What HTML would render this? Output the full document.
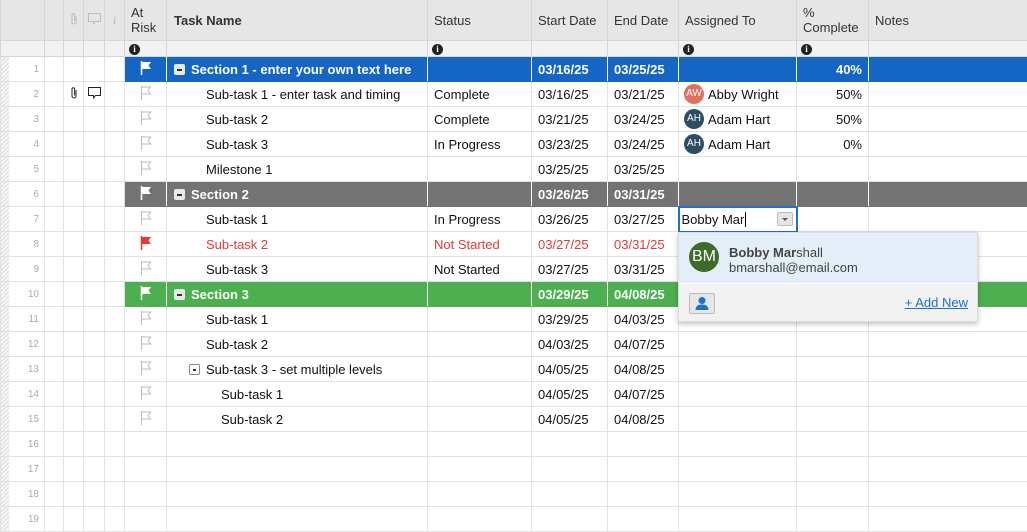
<!DOCTYPE html>
<html><head><meta charset="utf-8"><style>
*{box-sizing:border-box;margin:0;padding:0}
body{width:1027px;height:511px;overflow:hidden;background:#fff;font-family:"Liberation Sans",Arial,sans-serif;font-size:13px;color:#111;position:relative}
table{border-collapse:collapse;table-layout:fixed;width:1027px;margin-top:-1px}
td{border:1px solid #e2e2e2;white-space:nowrap;overflow:hidden;padding:0 6px;height:25px;vertical-align:middle}
tr.hd td{height:41px;background:#e6e6e6;border-color:#d6d6d6;color:#333;font-size:13px}
tr.ir td{height:16px;background:#f2f2f2;border-color:#d6d6d6;padding:0 4px}
td.n{color:#aaa;font-size:10px;text-align:right;padding-right:5px;position:relative}
td.n:before{content:"";position:absolute;left:0;top:0;bottom:0;width:8px;background:repeating-linear-gradient(135deg,#ddd 0 1px,#f6f6f6 1px 3px)}
td.c{text-align:center;padding:0}
td.r{text-align:right}
.s1 td.x{background:#1565c4;color:#fff;font-weight:bold;border-color:#1565c4;border-left-color:#fff;border-right-color:#fff}
.s2 td.x{background:#737373;color:#fff;font-weight:bold;border-color:#737373;border-left-color:#fff;border-right-color:#fff}
.s3 td.x{background:#4caf50;color:#fff;font-weight:bold;border-color:#4caf50;border-left-color:#fff;border-right-color:#fff}
.box{display:inline-block;width:11px;height:11px;background:#e8e8e8;border-radius:2px;vertical-align:-1px;margin-right:6px;position:relative}
.box:after{content:"";position:absolute;left:3px;right:3px;top:5px;height:2px;background:#333}
.bw{border:1px solid #888;background:#fff}
.bw:after{top:4px}
.i1{padding-left:39px}.i2{padding-left:54px}
.red{color:#e53935}
.fx{display:flex;align-items:center}
.av{display:inline-block;width:20px;height:20px;border-radius:50%;color:#fff;font-size:10px;text-align:center;line-height:20px;margin-right:4px;flex:none}
.info{display:inline-block;width:11px;height:11px;border-radius:50%;background:#222;color:#fff;font-size:9px;font-weight:bold;text-align:center;line-height:11px;font-family:"Liberation Serif",serif;vertical-align:middle}
.b{font-weight:bold}
</style></head><body>
<table>
<colgroup><col style="width:44px"><col style="width:19px"><col style="width:20px"><col style="width:21px"><col style="width:20px"><col style="width:42px"><col style="width:261px"><col style="width:104px"><col style="width:76px"><col style="width:71px"><col style="width:118px"><col style="width:72px"><col style="width:159px"></colgroup>
<tr class="hd"><td></td><td></td>
<td class="c"><svg width="8" height="13" viewBox="0 0 8 13"><path d="M6 4v6a2 2 0 0 1-4 0V3a1.3 1.3 0 0 1 2.6 0v6.5" fill="none" stroke="#bbb" stroke-width="1"/></svg></td>
<td class="c"><svg width="13" height="12" viewBox="0 0 13 12"><path d="M.5.5h12v8h-5l-2 2.5v-2.5h-5z" fill="none" stroke="#bbb"/></svg></td>
<td class="c" style="color:#bbb;font-style:italic;font-family:'Liberation Serif',serif">i</td>
<td style="padding:0 6px;line-height:15px">At<br>Risk</td>
<td class="b" style="padding-left:7px">Task Name</td><td>Status</td><td>Start Date</td><td>End Date</td><td>Assigned To</td><td style="line-height:15px">%<br>Complete</td><td>Notes</td></tr>
<tr class="ir"><td></td><td></td><td></td><td></td><td></td><td><span class="info">i</span></td><td></td><td><span class="info">i</span></td><td></td><td></td><td><span class="info">i</span></td><td><span class="info">i</span></td><td></td></tr>

<tr class="s1"><td class="n">1</td><td></td><td></td><td></td><td></td><td class="c x"><svg width="12" height="14"><path d="M1.5 0v14" stroke="#fff" stroke-width="1.5"/><path d="M2 1h9l-2.5 3.5 2.5 3.5h-9z" fill="#fff"/></svg></td><td class="x" style="padding-left:7px"><span class="box"></span>Section 1 - enter your own text here</td><td class="x"></td><td class="x">03/16/25</td><td class="x">03/25/25</td><td class="x"></td><td class="x r">40%</td><td class="x"></td></tr>

<tr><td class="n">2</td><td></td><td class="c"><svg width="8" height="13" viewBox="0 0 8 13"><path d="M6 4v6a2 2 0 0 1-4 0V3a1.3 1.3 0 0 1 2.6 0v6.5" fill="none" stroke="#222" stroke-width="1"/></svg></td><td class="c"><svg width="13" height="12" viewBox="0 0 13 12"><path d="M.5.5h12v8h-5l-2 2.5v-2.5h-5z" fill="none" stroke="#222"/></svg></td><td></td><td class="c"><svg width="12" height="14"><path d="M1.5 0v14M1.5 1h9l-2.5 3.5 2.5 3.5h-9" fill="none" stroke="#bbb"/></svg></td><td class="i1">Sub-task 1 - enter task and timing</td><td>Complete</td><td>03/16/25</td><td>03/21/25</td><td style="padding-left:5px"><div class="fx"><span class="av" style="background:#e07060">AW</span>Abby Wright</div></td><td class="r">50%</td><td></td></tr>

<tr><td class="n">3</td><td></td><td></td><td></td><td></td><td class="c"><svg width="12" height="14"><path d="M1.5 0v14M1.5 1h9l-2.5 3.5 2.5 3.5h-9" fill="none" stroke="#bbb"/></svg></td><td class="i1">Sub-task 2</td><td>Complete</td><td>03/21/25</td><td>03/24/25</td><td style="padding-left:5px"><div class="fx"><span class="av" style="background:#2d4e62">AH</span>Adam Hart</div></td><td class="r">50%</td><td></td></tr>

<tr><td class="n">4</td><td></td><td></td><td></td><td></td><td class="c"><svg width="12" height="14"><path d="M1.5 0v14M1.5 1h9l-2.5 3.5 2.5 3.5h-9" fill="none" stroke="#bbb"/></svg></td><td class="i1">Sub-task 3</td><td>In Progress</td><td>03/23/25</td><td>03/24/25</td><td style="padding-left:5px"><div class="fx"><span class="av" style="background:#2d4e62">AH</span>Adam Hart</div></td><td class="r">0%</td><td></td></tr>

<tr><td class="n">5</td><td></td><td></td><td></td><td></td><td class="c"><svg width="12" height="14"><path d="M1.5 0v14M1.5 1h9l-2.5 3.5 2.5 3.5h-9" fill="none" stroke="#bbb"/></svg></td><td class="i1">Milestone 1</td><td></td><td>03/25/25</td><td>03/25/25</td><td></td><td></td><td></td></tr>

<tr class="s2"><td class="n">6</td><td></td><td></td><td></td><td></td><td class="c x"><svg width="12" height="14"><path d="M1.5 0v14" stroke="#fff" stroke-width="1.5"/><path d="M2 1h9l-2.5 3.5 2.5 3.5h-9z" fill="#fff"/></svg></td><td class="x" style="padding-left:7px"><span class="box"></span>Section 2</td><td class="x"></td><td class="x">03/26/25</td><td class="x">03/31/25</td><td class="x"></td><td class="x"></td><td class="x"></td></tr>

<tr><td class="n">7</td><td></td><td></td><td></td><td></td><td class="c"><svg width="12" height="14"><path d="M1.5 0v14M1.5 1h9l-2.5 3.5 2.5 3.5h-9" fill="none" stroke="#bbb"/></svg></td><td class="i1">Sub-task 1</td><td>In Progress</td><td>03/26/25</td><td>03/27/25</td><td style="border:2px solid #1e6fd9;padding-left:2px;position:relative">Bobby Mar<span style="border-left:1px solid #000;margin-left:1px"></span><span style="position:absolute;right:3px;top:4px;width:16px;height:14px;background:#e6e6e6;border:1px solid #bbb;border-radius:2px"><span style="position:absolute;left:4px;top:5px;border:3px solid transparent;border-top:3px solid #555"></span></span></td><td></td><td></td></tr>

<tr><td class="n">8</td><td></td><td></td><td></td><td></td><td class="c"><svg width="12" height="14"><path d="M1.5 0v14" stroke="#e53935" stroke-width="1.5"/><path d="M2 1h9l-2.5 3.5 2.5 3.5h-9z" fill="#e53935"/></svg></td><td class="i1 red">Sub-task 2</td><td class="red">Not Started</td><td class="red">03/27/25</td><td class="red">03/31/25</td><td></td><td></td><td></td></tr>

<tr><td class="n">9</td><td></td><td></td><td></td><td></td><td class="c"><svg width="12" height="14"><path d="M1.5 0v14M1.5 1h9l-2.5 3.5 2.5 3.5h-9" fill="none" stroke="#bbb"/></svg></td><td class="i1">Sub-task 3</td><td>Not Started</td><td>03/27/25</td><td>03/31/25</td><td></td><td></td><td></td></tr>

<tr class="s3"><td class="n">10</td><td></td><td></td><td></td><td></td><td class="c x"><svg width="12" height="14"><path d="M1.5 0v14" stroke="#fff" stroke-width="1.5"/><path d="M2 1h9l-2.5 3.5 2.5 3.5h-9z" fill="#fff"/></svg></td><td class="x" style="padding-left:7px"><span class="box"></span>Section 3</td><td class="x"></td><td class="x">03/29/25</td><td class="x">04/08/25</td><td class="x"></td><td class="x"></td><td class="x"></td></tr>

<tr><td class="n">11</td><td></td><td></td><td></td><td></td><td class="c"><svg width="12" height="14"><path d="M1.5 0v14M1.5 1h9l-2.5 3.5 2.5 3.5h-9" fill="none" stroke="#bbb"/></svg></td><td class="i1">Sub-task 1</td><td></td><td>03/29/25</td><td>04/03/25</td><td></td><td></td><td></td></tr>
<tr><td class="n">12</td><td></td><td></td><td></td><td></td><td class="c"><svg width="12" height="14"><path d="M1.5 0v14M1.5 1h9l-2.5 3.5 2.5 3.5h-9" fill="none" stroke="#bbb"/></svg></td><td class="i1">Sub-task 2</td><td></td><td>04/03/25</td><td>04/07/25</td><td></td><td></td><td></td></tr>
<tr><td class="n">13</td><td></td><td></td><td></td><td></td><td class="c"><svg width="12" height="14"><path d="M1.5 0v14M1.5 1h9l-2.5 3.5 2.5 3.5h-9" fill="none" stroke="#bbb"/></svg></td><td style="padding-left:22px"><span class="box bw"></span>Sub-task 3 - set multiple levels</td><td></td><td>04/05/25</td><td>04/08/25</td><td></td><td></td><td></td></tr>
<tr><td class="n">14</td><td></td><td></td><td></td><td></td><td class="c"><svg width="12" height="14"><path d="M1.5 0v14M1.5 1h9l-2.5 3.5 2.5 3.5h-9" fill="none" stroke="#bbb"/></svg></td><td class="i2">Sub-task 1</td><td></td><td>04/05/25</td><td>04/07/25</td><td></td><td></td><td></td></tr>
<tr><td class="n">15</td><td></td><td></td><td></td><td></td><td class="c"><svg width="12" height="14"><path d="M1.5 0v14M1.5 1h9l-2.5 3.5 2.5 3.5h-9" fill="none" stroke="#bbb"/></svg></td><td class="i2">Sub-task 2</td><td></td><td>04/05/25</td><td>04/08/25</td><td></td><td></td><td></td></tr>
<tr><td class="n">16</td><td></td><td></td><td></td><td></td><td></td><td></td><td></td><td></td><td></td><td></td><td></td><td></td></tr>
<tr><td class="n">17</td><td></td><td></td><td></td><td></td><td></td><td></td><td></td><td></td><td></td><td></td><td></td><td></td></tr>
<tr><td class="n">18</td><td></td><td></td><td></td><td></td><td></td><td></td><td></td><td></td><td></td><td></td><td></td><td></td></tr>
<tr><td class="n">19</td><td></td><td></td><td></td><td></td><td></td><td></td><td></td><td></td><td></td><td></td><td></td><td></td></tr>
</table>

<div style="position:absolute;left:678px;top:233px;width:300px;height:90px;background:#f2f2f2;border:1px solid #ddd;box-shadow:0 2px 5px rgba(0,0,0,.25)">
 <div style="height:51px;background:#e4eef9;border-bottom:1px solid #fff;position:relative">
  <div style="position:absolute;left:10px;top:9px;width:30px;height:30px;border-radius:50%;background:#3d6b2a;color:#fff;font-size:16px;text-align:center;line-height:30px">BM</div>
  <div style="position:absolute;left:50px;top:12px;color:#444;line-height:15px"><b>Bobby Mar</b>shall<br>bmarshall@email.com</div>
 </div>
 <div style="position:absolute;left:10px;top:60px;width:26px;height:21px;background:#e6e6e6;border:1px solid #bbb;border-radius:2px">
  <svg width="24" height="19" viewBox="0 0 24 19"><circle cx="12" cy="6.5" r="3.5" fill="#1a73c9"/><path d="M5.5 16c0-4 3-5.5 6.5-5.5s6.5 1.5 6.5 5.5z" fill="#1a73c9"/></svg>
 </div>
 <div style="position:absolute;right:9px;top:62px;color:#1a6fd1;text-decoration:underline">+ Add New</div>
</div>
</body></html>
